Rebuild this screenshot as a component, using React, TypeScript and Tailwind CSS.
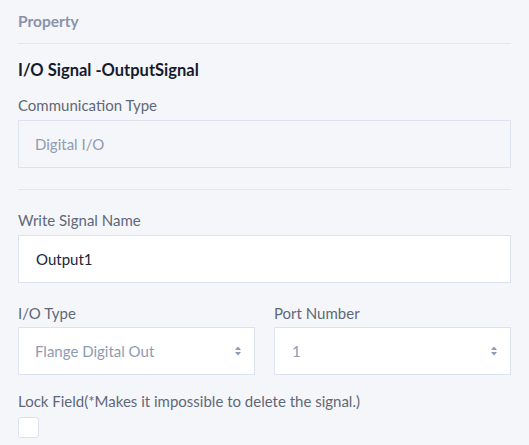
import React from "react";

function UpDown() {
  return (
    <svg width="8" height="12" viewBox="0 0 8 12" className="shrink-0">
      <path d="M1 5 L4 1.5 L7 5 Z" fill="#8f9bb0" />
      <path d="M1 7 L4 10.5 L7 7 Z" fill="#8f9bb0" />
    </svg>
  );
}

export default function App() {
  return (
    <div className="w-[529px] h-[445px] overflow-hidden bg-[#f5f6fa] px-[18px] font-['Lato','Liberation_Sans',sans-serif] text-[15px]">
      <div className="h-[44px] border-b border-[#e3e6ee] flex items-center">
        <span className="text-[15.5px] font-bold text-[#8a93a8]">Property</span>
      </div>
      <div className="h-[52px] flex items-center">
        <span className="text-[16.5px] font-bold text-[#141b2d]">I/O Signal -OutputSignal</span>
      </div>
      <div className="h-[18px] flex items-center text-[#5f6878]">Communication Type</div>
      <div className="mt-[6px] h-[48px] border border-[#dce3ee] bg-[#f5f6fa] flex items-center pl-[16px] text-[#8e9bb2]">
        Digital I/O
      </div>
      <div className="mt-[21px] h-px bg-[#e3e6ee]" />
      <div className="mt-[21px] h-[18px] flex items-center text-[#5f6878]">Write Signal Name</div>
      <div className="mt-[6px] h-[48px] border border-[#dce3ee] bg-white flex items-center pl-[17px] text-[#1c2538]">
        Output1
      </div>
      <div className="mt-[21px] grid grid-cols-2 gap-x-[19px]">
        <div>
          <div className="h-[18px] flex items-center text-[#5f6878]">I/O Type</div>
          <div className="mt-[5px] h-[48px] border border-[#dce3ee] bg-white flex items-center justify-between pl-[16px] pr-[12px] text-[#8e9bb2]">
            <span>Flange Digital Out</span>
            <UpDown />
          </div>
        </div>
        <div>
          <div className="h-[18px] flex items-center text-[#5f6878]">Port Number</div>
          <div className="mt-[5px] h-[48px] border border-[#dce3ee] bg-white flex items-center justify-between pl-[17px] pr-[12px] text-[#8e9bb2]">
            <span>1</span>
            <UpDown />
          </div>
        </div>
      </div>
      <div className="mt-[17px] h-[18px] flex items-center text-[#5f6878]">
        Lock Field(*Makes it impossible to delete the signal.)
      </div>
      <div className="mt-[7px] w-[21px] h-[21px] rounded-[3px] border border-[#dce3ee] bg-white" />
    </div>
  );
}
